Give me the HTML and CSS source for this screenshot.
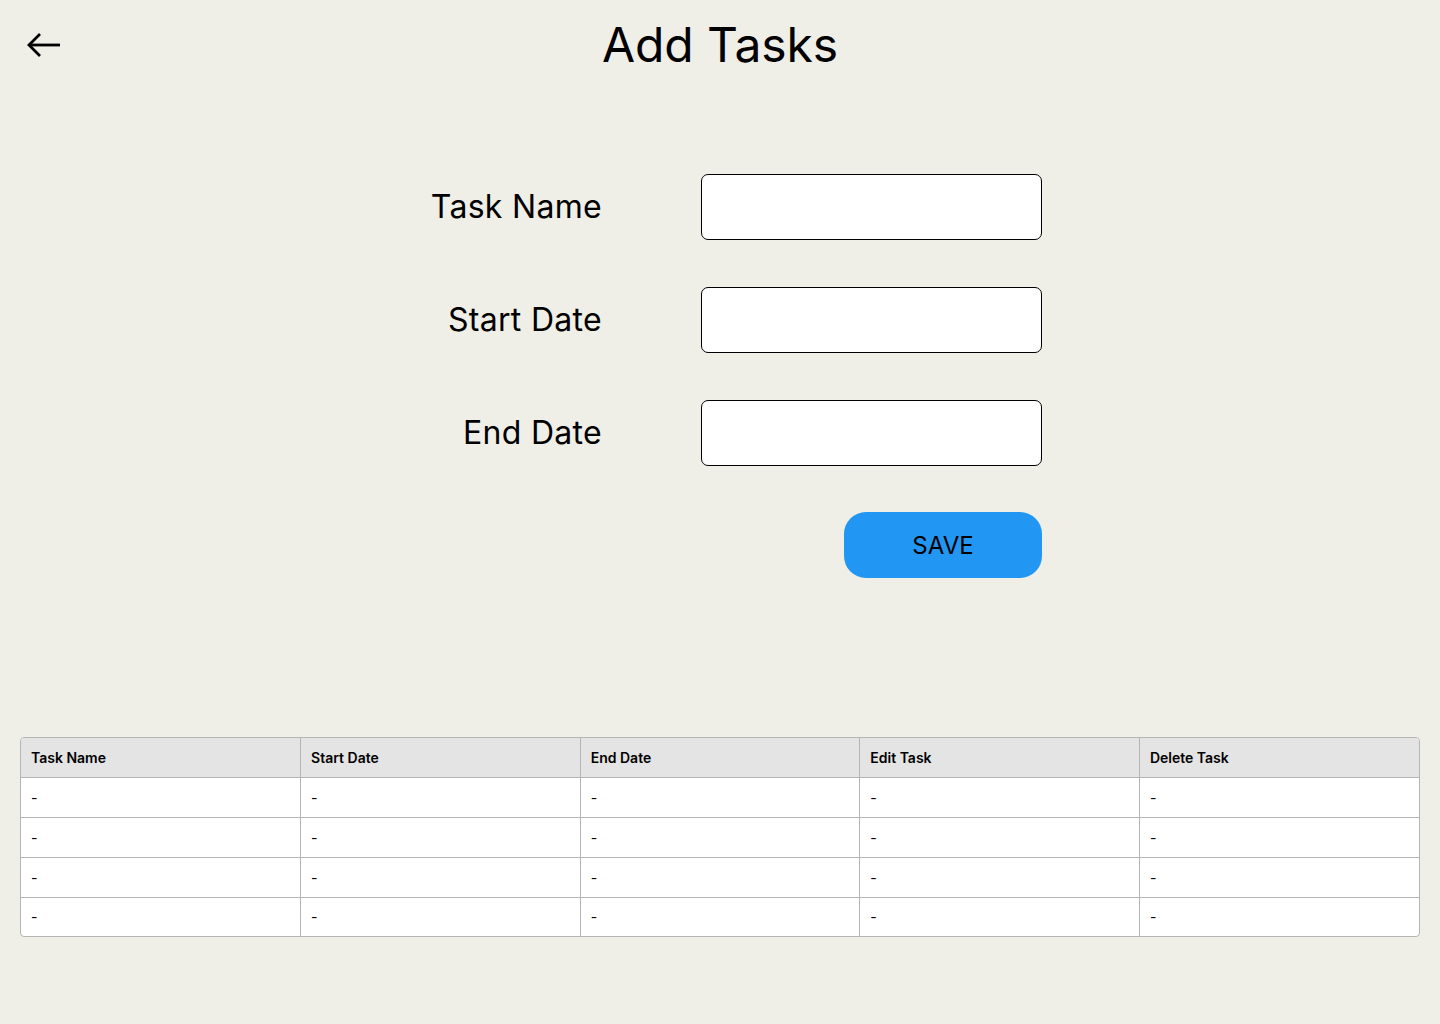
FILE: index.html
```html
<!DOCTYPE html>
<html lang="en">
<head>
<meta charset="utf-8">
<title>Add Tasks</title>
<link rel="stylesheet" href="styles.css">
</head>
<body>
<header class="topbar">
  <a class="back" href="#" aria-label="Back">
    <svg width="36" height="28" viewBox="0 0 36 28" fill="none" stroke="#000" stroke-width="2.8" stroke-linecap="butt" stroke-linejoin="miter">
      <path d="M3 14 H34"/>
      <path d="M14 3 L3 14 L14 25"/>
    </svg>
  </a>
  <h1 class="title">Add Tasks</h1>
  <div></div>
</header>

<form class="task-form">
  <label class="form-label" for="name">Task Name</label>
  <input class="form-input" id="name" type="text">
  <label class="form-label" for="start">Start Date</label>
  <input class="form-input" id="start" type="text">
  <label class="form-label" for="end">End Date</label>
  <input class="form-input" id="end" type="text">
  <div class="actions">
    <button type="button" class="save-btn">SAVE</button>
  </div>
</form>

<div class="table-wrap">
  <table class="task-table">
    <thead>
      <tr><th>Task Name</th><th>Start Date</th><th>End Date</th><th>Edit Task</th><th>Delete Task</th></tr>
    </thead>
    <tbody>
      <tr><td>-</td><td>-</td><td>-</td><td>-</td><td>-</td></tr>
      <tr><td>-</td><td>-</td><td>-</td><td>-</td><td>-</td></tr>
      <tr><td>-</td><td>-</td><td>-</td><td>-</td><td>-</td></tr>
      <tr><td>-</td><td>-</td><td>-</td><td>-</td><td>-</td></tr>
    </tbody>
  </table>
</div>
</body>
</html>
```

FILE: styles.css
```css
* { box-sizing: border-box; }
html, body { margin: 0; padding: 0; }
body {
  background: #efeee7;
  font-family: Inter, "Noto Sans", sans-serif;
  color: #000;
  width: 1440px;
  height: 1024px;
}
.topbar {
  display: grid;
  grid-template-columns: 1fr auto 1fr;
  align-items: center;
  height: 90px;
}
.back {
  display: flex;
  align-items: center;
  padding-left: 26px;
  margin-top: -1px;
}
.back svg { display: block; }
.title {
  margin: 0;
  font-size: 48px;
  font-weight: 400;
  line-height: 58px;
  letter-spacing: -0.1px;
}
.task-form {
  display: grid;
  grid-template-columns: 602px 341px;
  grid-auto-rows: 66px;
  column-gap: 99px;
  row-gap: 47px;
  margin-top: 84px;
}
.form-label {
  align-self: center;
  text-align: right;
  font-size: 32px;
  line-height: 40px;
  letter-spacing: 0.3px;
}
.form-input {
  width: 341px;
  height: 66px;
  background: #fff;
  border: 1px solid #000;
  border-radius: 7px;
  font: inherit;
  padding: 0 12px;
}
.actions {
  grid-column: 2;
  display: flex;
  justify-content: flex-end;
  margin-top: -1px;
}
.save-btn {
  width: 198px;
  height: 66px;
  border: none;
  border-radius: 22px;
  background: #2196f3;
  color: #000;
  font-family: Inter, "Noto Sans", sans-serif;
  font-size: 24px;
  font-weight: 400;
  cursor: pointer;
}
.table-wrap {
  margin: 158px 20px 0;
  border: 1px solid #b5b5b5;
  border-radius: 4px;
  overflow: hidden;
  background: #fff;
}
.task-table {
  width: 100%;
  border-collapse: collapse;
  table-layout: fixed;
  font-size: 14px;
}
.task-table th, .task-table td {
  height: 40px;
  padding: 0 0 0 10px;
  text-align: left;
  border-right: 1px solid #b5b5b5;
  border-bottom: 1px solid #b5b5b5;
  vertical-align: middle;
}
.task-table th { height: 39px; }
.task-table th:last-child, .task-table td:last-child { border-right: none; }
.task-table tbody tr:last-child td { border-bottom: none; height: 39px; }
.task-table th {
  background: #e4e4e4;
  font-weight: 600;
}
```
